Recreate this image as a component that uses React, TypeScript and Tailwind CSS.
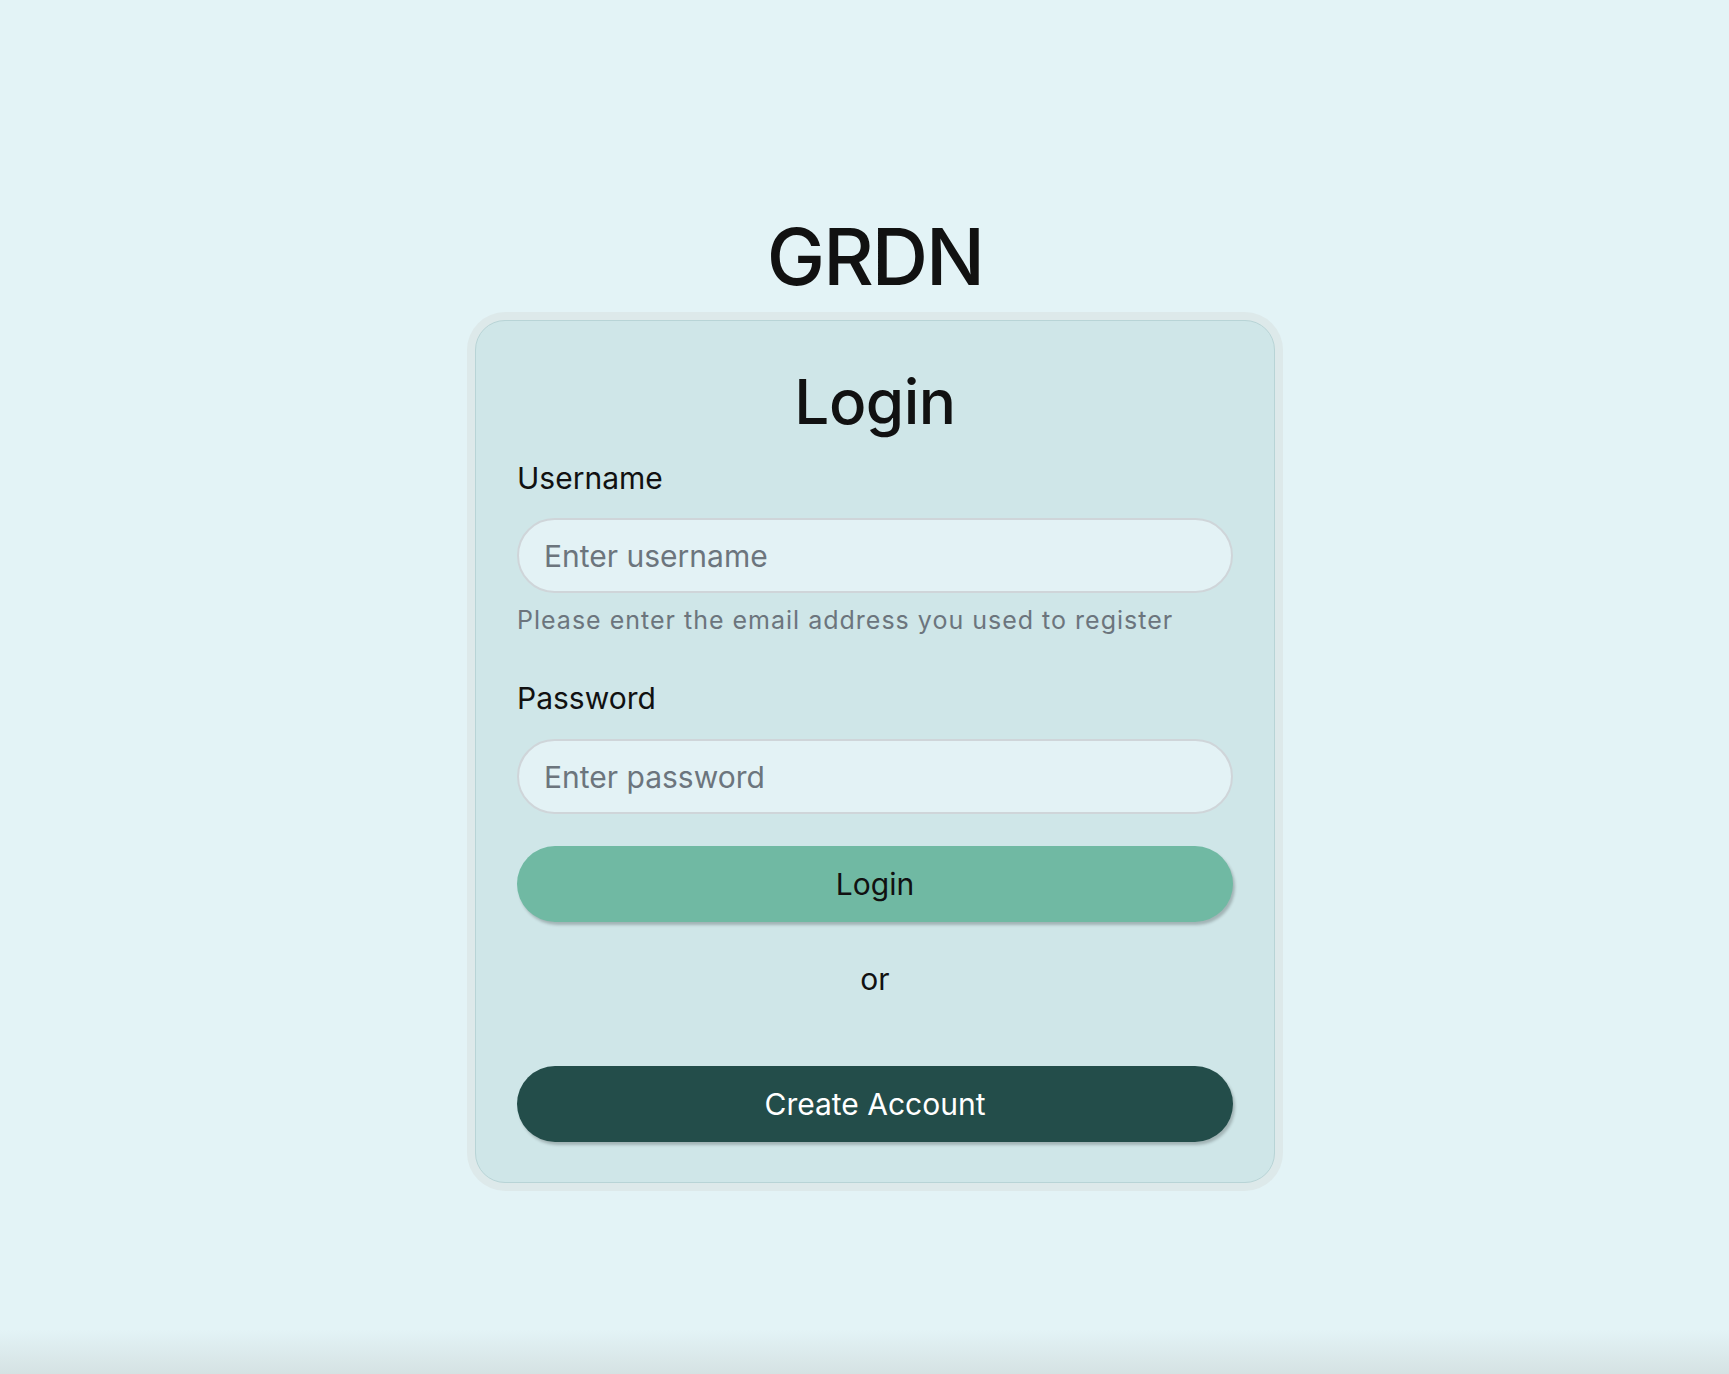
import { useState } from "react";

export default function App() {
    const [username, setUsername] = useState("");
    const [password, setPassword] = useState("");

    return (
        <div className="flex h-screen flex-col bg-[#e3f3f6] font-['Inter',sans-serif] text-[#111]">
            <main className="flex flex-1 flex-col items-center pl-[21px] pt-[210px]">
                <h1 className="text-[78px] leading-[94px] font-medium tracking-tight">GRDN</h1>

                <div className="mt-[16px] w-[800px] rounded-[30px] border border-[#b8d4d6] bg-[#cfe6e8] px-[41px] pt-[44px] pb-[40px] shadow-[0_0_0_8px_#dde9ea]">
                    <h2 className="text-center text-[62px] leading-[74px] font-medium tracking-[-0.5px]">Login</h2>

                    <form className="flex flex-col" onSubmit={(e) => e.preventDefault()}>
                        <label htmlFor="username" className="mt-[21px] text-[30px] leading-[36px]">Username</label>
                        <input
                            id="username"
                            type="text"
                            value={username}
                            onChange={(e) => setUsername(e.target.value)}
                            placeholder="Enter username"
                            className="mt-[22px] h-[75px] w-full rounded-full border-2 border-[#cfd5d9] bg-[#e3f2f5] px-[25px] text-[30px] text-[#111] outline-none placeholder:text-[#6c757d]"
                        />
                        <p className="mt-[13px] text-[25px] leading-[29px] tracking-[1px] text-[#6c757d]">Please enter the email address you used to register</p>

                        <label htmlFor="password" className="mt-[45px] text-[30px] leading-[36px]">Password</label>
                        <input
                            id="password"
                            type="password"
                            value={password}
                            onChange={(e) => setPassword(e.target.value)}
                            placeholder="Enter password"
                            className="mt-[23px] h-[75px] w-full rounded-full border-2 border-[#cfd5d9] bg-[#e3f2f5] px-[25px] text-[30px] text-[#111] outline-none placeholder:text-[#6c757d]"
                        />

                        <button type="submit" className="mt-[32px] h-[76px] w-full rounded-full bg-[#70b9a3] text-[30px] text-[#111] shadow-[2px_3px_3px_rgba(0,0,0,0.22)]">Login</button>

                        <p className="mt-[39px] text-center text-[30px] leading-[36px]">or</p>

                        <button type="button" className="mt-[69px] h-[76px] w-full rounded-full bg-[#234d4a] text-[30px] text-white shadow-[2px_3px_3px_rgba(0,0,0,0.22)]">Create Account</button>
                    </form>
                </div>
            </main>
            <div className="h-[44px] bg-gradient-to-b from-[#e3f3f6] to-[#d5e2e3]"></div>
        </div>
    )
}
